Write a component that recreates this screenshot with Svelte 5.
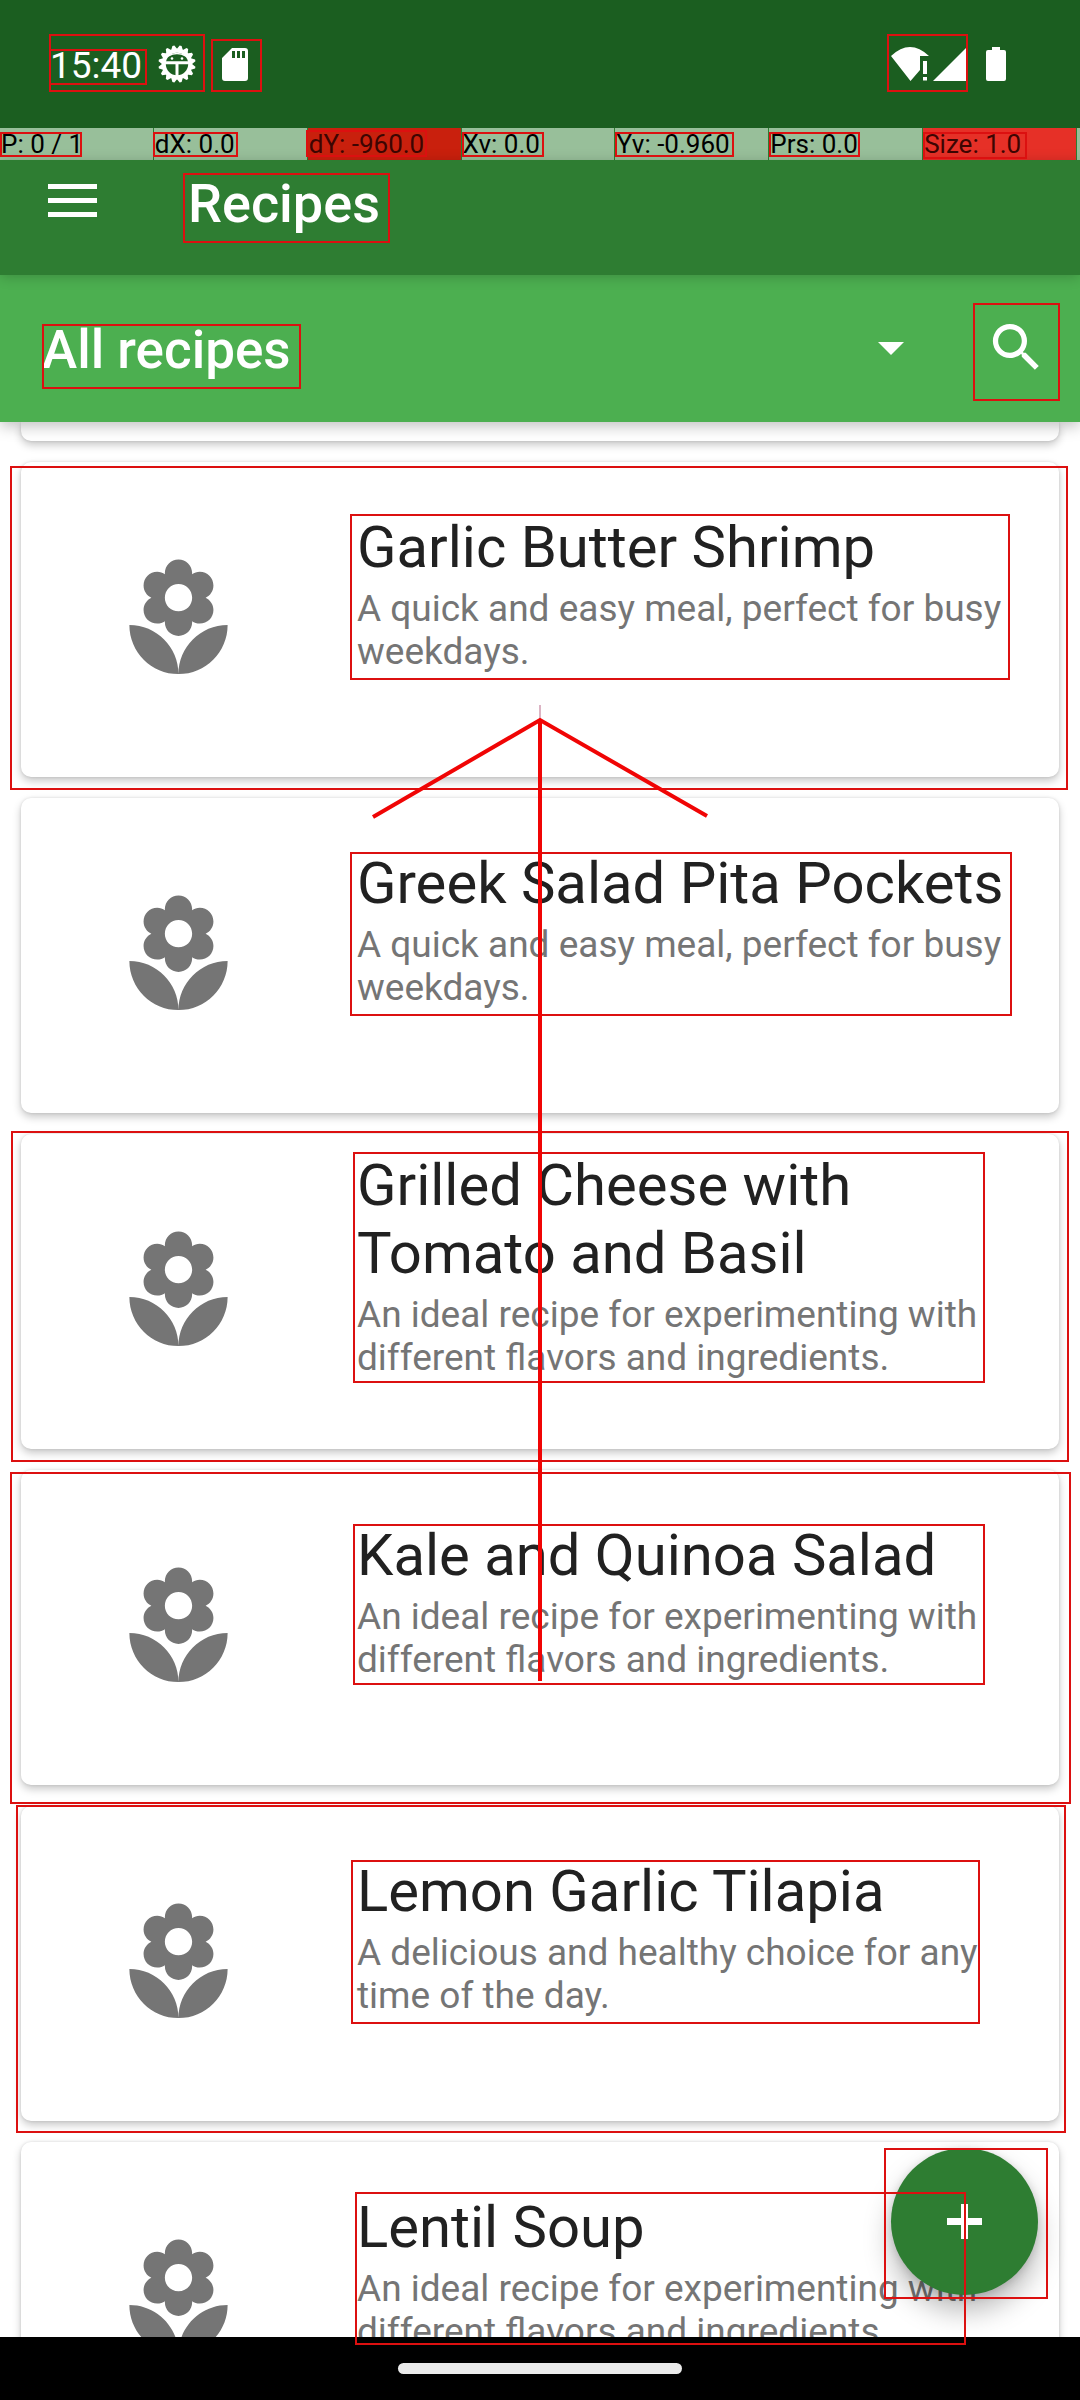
<script>
  const metrics = [
    { text: 'P: 0 / 1' },
    { text: 'dX: 0.0' },
    { text: 'dY: -960.0', tone: 'deep' },
    { text: 'Xv: 0.0' },
    { text: 'Yv: -0.960' },
    { text: 'Prs: 0.0' },
    { text: 'Size: 1.0', tone: 'bright' }
  ];

  const quick = 'A quick and easy meal, perfect for busy weekdays.';
  const ideal = 'An ideal recipe for experimenting with different flavors and ingredients.';
  const recipes = [
    { title: 'Garlic Butter Shrimp', note: quick },
    { title: 'Greek Salad Pita Pockets', note: quick },
    { title: 'Grilled Cheese with Tomato and Basil', note: ideal },
    { title: 'Kale and Quinoa Salad', note: ideal },
    { title: 'Lemon Garlic Tilapia', note: 'A delicious and healthy choice for any time of the day.' },
    { title: 'Lentil Soup', note: ideal }
  ];

  // Highlighted regions as [left, top, right, bottom]
  const marks = [
    [50, 35, 204, 91], [50, 50, 146, 84], [212, 40, 261, 91], [888, 35, 967, 91],
    [1, 133, 81, 156], [154, 133, 237, 156], [307, 131, 426, 156], [463, 133, 543, 156],
    [616, 133, 733, 156], [770, 133, 859, 156], [924, 133, 1026, 158],
    [184, 174, 389, 242], [43, 325, 300, 388], [974, 304, 1059, 400],
    [11, 467, 1067, 789], [351, 515, 1009, 679], [351, 853, 1011, 1015],
    [12, 1132, 1068, 1461], [354, 1153, 984, 1382],
    [11, 1473, 1070, 1803], [354, 1525, 984, 1684],
    [17, 1806, 1065, 2132], [352, 1861, 979, 2023],
    [885, 2149, 1047, 2298], [356, 2193, 965, 2344]
  ];

  const teeth = Array.from({ length: 16 }, (_, i) => i * 22.5 + 11.25);
</script>

<div class="screen">
  <header class="status">
    <span class="time">15:40</span>
    <svg class="debug" viewBox="-19 -19 38 38" aria-hidden="true">
      {#each teeth as a}
        <path d="M-3.4 -14 L-1 -18.6 H1 L3.4 -14Z" fill="#fff" transform="rotate({a})" />
      {/each}
      <circle r="13.2" fill="none" stroke="#fff" stroke-width="4" />
      <path d="M-12 -1.2H12M0 -1V13" stroke="#fff" stroke-width="3" />
      <path d="M-9 -8Q0 -13 9 -8" fill="none" stroke="#fff" stroke-width="1.5" />
      <circle cx="-5" cy="-5.5" r="1.3" fill="#fff" />
      <circle cx="5" cy="-5.5" r="1.3" fill="#fff" />
    </svg>
    <svg class="sd" viewBox="0 0 26 33" aria-hidden="true">
      <path fill="#fff" fill-rule="evenodd" d="M10 0H23Q26 0 26 3V30Q26 33 23 33H3Q0 33 0 30V10ZM10 3V10H13V3ZM15 3V10H18V3ZM20 3V10H23V3Z" />
    </svg>
    <span class="grow"></span>
    <svg class="signals" viewBox="0 0 75 34" aria-hidden="true">
      <path fill="#fff" d="M0 9Q19 -9 38 9H29V23L19.500 34Z" />
      <path fill="#fff" d="M32 14H36V27H32ZM32 30H36V33.500H32Z" />
      <path fill="#fff" d="M42 34L75 1V34Z" />
    </svg>
    <svg class="battery" viewBox="0 0 20 34" aria-hidden="true">
      <path fill="#fff" d="M6 0H14V3H18Q20 3 20 5V32Q20 34 18 34H2Q0 34 0 32V5Q0 3 2 3H6Z" />
    </svg>
  </header>

  <div class="metrics">
    {#each metrics as m}
      <span class="metric {m.tone ?? ''}">{m.text}</span>
    {/each}
  </div>

  <div class="appbar">
    <button class="menu" aria-label="Open menu">
      <svg viewBox="0 0 49 33"><path d="M0 2.500H49M0 16.500H49M0 30.500H49" stroke="#fff" stroke-width="5" /></svg>
    </button>
    <h1>Recipes</h1>
  </div>

  <div class="filter">
    <div class="picker">
      <select aria-label="Recipe category">
        <option>All recipes</option>
      </select>
      <svg class="caret" viewBox="0 0 26 13" aria-hidden="true"><path fill="#fff" d="M0 0H26L13 13Z" /></svg>
    </div>
    <button class="search" aria-label="Search">
      <svg viewBox="0 0 24 24"><path fill="#fff" d="M15.500 14h-.79l-.28-.27A6.471 6.471 0 0 0 16 9.500 6.500 6.500 0 1 0 9.500 16c1.610 0 3.090-.59 4.230-1.570l.27.28v.79l5 4.990L20.490 19l-4.990-5zm-6 0C7.010 14 5 11.990 5 9.500S7.010 5 9.500 5 14 7.010 14 9.500 11.990 14 9.500 14z" /></svg>
    </button>
  </div>

  <main>
    <div class="tail"></div>
    <ul>
      {#each recipes as r}
        <li class="card">
          <div class="thumb">
            <svg viewBox="0 0 24 24" aria-hidden="true">
              <path fill="#757575" d="M12 22c4.970 0 9-4.030 9-9-4.970 0-9 4.030-9 9zM5.600 10.250c0 1.380 1.120 2.500 2.500 2.500.53 0 1.010-.16 1.420-.44l-.02.19c0 1.380 1.120 2.500 2.500 2.500s2.500-1.120 2.500-2.500l-.02-.19c.4.28.89.44 1.420.44 1.380 0 2.500-1.120 2.500-2.500 0-1-.59-1.850-1.430-2.250.84-.4 1.430-1.250 1.430-2.250 0-1.380-1.120-2.500-2.500-2.500-.53 0-1.010.16-1.420.44l.02-.19C14.500 2.120 13.380 1 12 1S9.500 2.120 9.500 3.500l.02.19c-.4-.28-.89-.44-1.420-.44-1.380 0-2.500 1.120-2.500 2.500 0 1 .59 1.850 1.430 2.250-.84.4-1.430 1.250-1.430 2.250zM12 5.500c1.380 0 2.500 1.120 2.500 2.500s-1.120 2.500-2.500 2.500S9.500 9.380 9.500 8s1.120-2.500 2.500-2.500zM3 13c0 4.970 4.030 9 9 9 0-4.970-4.030-9-9-9z" />
            </svg>
          </div>
          <div class="copy">
            <h2>{r.title}</h2>
            <p>{r.note}</p>
          </div>
        </li>
      {/each}
    </ul>
    <button class="fab" aria-label="Add recipe">
      <svg viewBox="0 0 35 35"><path d="M17.500 3V32M3 17.500H32" stroke="#fff" stroke-width="7" stroke-linecap="square" /></svg>
    </button>
  </main>

  <nav><span class="pill"></span></nav>

  <svg class="overlay" width="1080" height="2400" viewBox="0 0 1080 2400" aria-hidden="true">
    {#each marks as [l, t, r, b]}
      <rect x={l} y={t} width={r - l} height={b - t} />
    {/each}
    <path class="trace" d="M540 705V720" />
    <path class="arrow" d="M540 719V1681M373 817L540 720L707 816" />
  </svg>
</div>

<style>
  :global(body) { margin: 0; background: #fff; }
  .screen {
    position: relative;
    display: flex;
    flex-direction: column;
    height: 100vh;
    overflow: hidden;
    font-family: Roboto, sans-serif;
    background: #fff;
  }
  svg { display: block; }
  button { border: 0; padding: 0; background: none; display: grid; place-items: center; }

  .status {
    display: flex;
    align-items: center;
    box-sizing: border-box;
    height: 128px;
    flex: none;
    padding: 0 74px 0 50px;
    background: #1b5e20;
    color: #fff;
  }
  .time { padding-top: 4px; font-size: 37px; line-height: 44px; }
  .debug { width: 38px; height: 38px; margin-left: 16px; }
  .sd { width: 26px; height: 33px; margin-left: 26px; }
  .grow { flex: 1; }
  .signals { width: 75px; height: 34px; }
  .battery { width: 20px; height: 34px; margin-left: 20px; }

  .metrics {
    display: flex;
    gap: 1px;
    flex: none;
    padding-right: 4px;
    background: #2e7d32;
    box-shadow: inset -3px 0 #98bf9a;
  }
  .metric {
    flex: 1 1 0;
    padding-left: 1px;
    font-size: 26px;
    line-height: 32px;
    white-space: nowrap;
    color: #000;
    background: #98bf9a;
  }
  .deep { background: #c9200d; color: #3d0502; }
  .bright { background: #e63027; color: #3d0502; }

  .appbar {
    display: flex;
    align-items: center;
    flex: none;
    position: relative;
    z-index: 2;
    height: 115px;
    background: #2e7d32;
    box-shadow: 0 2px 12px rgba(0, 0, 0, 0.2);
  }
  .menu { width: 145px; height: 82px; margin-bottom: 34px; }
  .menu svg { width: 49px; height: 33px; }
  h1 {
    margin: 0 0 28px 43px;
    font-size: 54px;
    font-weight: 500;
    line-height: 62px;
    color: #fff;
  }

  .filter {
    display: flex;
    align-items: center;
    flex: none;
    position: relative;
    z-index: 1;
    height: 147px;
    padding: 0 22px 0 42px;
    background: #4caf50;
    box-shadow: 0 4px 14px rgba(0, 0, 0, 0.25);
  }
  .picker { flex: 1; display: grid; align-items: center; }
  .picker > * { grid-area: 1 / 1; }
  select {
    appearance: none;
    width: 100%;
    padding: 2px 0 0;
    border: 0;
    background: none;
    color: #fff;
    font: 500 53px/62px Roboto, sans-serif;
  }
  .caret { width: 26px; height: 13px; justify-self: end; margin-right: 70px; pointer-events: none; }
  .search { width: 84px; height: 96px; margin-bottom: 2px; }
  .search svg { width: 63px; height: 63px; }

  main { flex: 1; min-height: 0; position: relative; overflow: hidden; }
  .tail, .card {
    margin: 0 21px 21px;
    background: #fff;
    border-radius: 10px;
    box-shadow: 0 4px 8px rgba(0, 0, 0, 0.22), 0 0 3px rgba(0, 0, 0, 0.12);
  }
  .tail { height: 19px; border-radius: 0 0 10px 10px; }
  ul { margin: 0; padding: 0; list-style: none; }
  .card { display: flex; gap: 21px; min-height: 315px; }
  .thumb { flex: none; width: 315px; display: grid; place-items: center; }
  .thumb svg { width: 131px; height: 131px; }
  .copy {
    flex: 1;
    display: flex;
    flex-direction: column;
    justify-content: center;
    gap: 6px;
    padding: 0 32px 53px 0;
  }
  h2 { margin: 0; font-size: 58px; font-weight: 400; line-height: 68px; color: #212121; }
  p { margin: 0; font-size: 37px; line-height: 43px; color: #757575; }

  .fab {
    position: absolute;
    right: 42px;
    bottom: 42px;
    width: 147px;
    height: 147px;
    border-radius: 50%;
    background: #2e7d32;
    box-shadow: 0 16px 28px rgba(0, 0, 0, 0.28), 0 2px 8px rgba(0, 0, 0, 0.15);
  }
  .fab svg { width: 35px; height: 35px; }

  nav {
    flex: none;
    height: 63px;
    display: grid;
    place-items: center;
    background: #000;
  }
  .pill { width: 284px; height: 11px; border-radius: 6px; background: #ebebeb; }

  .overlay { position: absolute; z-index: 3; top: 0; left: 0; pointer-events: none; fill: none; }
  .overlay rect { stroke: #dc1010; stroke-width: 2; }
  .arrow { stroke: #f00505; stroke-width: 4; }
  .trace { stroke: #dcb4c4; stroke-width: 2; }
</style>
